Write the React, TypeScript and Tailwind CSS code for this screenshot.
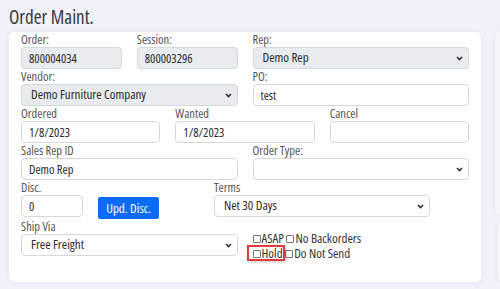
import React from "react";

const Label = ({ children }: { children?: React.ReactNode }) => (
  <div className="h-[15px] text-[12.5px] leading-[15px] text-[#555] whitespace-nowrap">{children}</div>
);

const Input = ({ value, disabled }: { value: string; disabled?: boolean }) => (
  <input
    readOnly
    value={value}
    className={`block w-full h-[22px] border border-[#d5d9de] rounded-[4px] pl-[7px] text-[12.5px] font-stretch-condensed text-[#2b2b2b] outline-none ${
      disabled ? "bg-[#e9ecef]" : "bg-white"
    }`}
  />
);

const Select = ({ value, disabled }: { value: string; disabled?: boolean }) => (
  <div className="relative">
    <select
      defaultValue={value}
      className={`block w-full h-[22px] appearance-none border border-[#d5d9de] rounded-[4px] pl-[9px] text-[13px] font-stretch-condensed text-[#2b2b2b] outline-none ${
        disabled ? "bg-[#e9ecef]" : "bg-white"
      }`}
    >
      <option value={value}>{value}</option>
    </select>
    <svg
      className="absolute right-[6px] top-[9px] pointer-events-none"
      width="7"
      height="5"
      viewBox="0 0 7 5"
    >
      <path d="M1 1 L3.5 3.5 L6 1" fill="none" stroke="#333" strokeWidth="1.7" />
    </svg>
  </div>
);

const Box = () => (
  <span className="inline-block w-[8px] h-[8px] border border-[#777] rounded-[1px] bg-white mr-[1px]" />
);

export default function App() {
  return (
    <div className="w-[500px] h-[289px] overflow-hidden bg-[#eff2f9] font-['Open_Sans',sans-serif] font-stretch-condensed">
      <h1 className="h-[32px] pl-[9px] pt-[5px] text-[19px] leading-[24px] text-[#383838]">Order Maint.</h1>
      <div className="flex gap-[14px] pl-[9px]">
        <div className="w-[472px] shrink-0 bg-white rounded-[5px] shadow-[0_0_6px_rgba(20,40,100,0.07)] px-[12px] pb-[12px]">
          <div className="grid grid-cols-12 gap-x-[15px]">
            <div className="col-span-3">
              <Label>Order:</Label>
              <Input value="800004034" disabled />
            </div>
            <div className="col-span-3">
              <Label>Session:</Label>
              <Input value="800003296" disabled />
            </div>
            <div className="col-span-6">
              <Label>Rep:</Label>
              <Select value="Demo Rep" disabled />
            </div>

            <div className="col-span-6">
              <Label>Vendor:</Label>
              <Select value="Demo Furniture Company" disabled />
            </div>
            <div className="col-span-6">
              <Label>PO:</Label>
              <Input value="test" />
            </div>

            <div className="col-span-4">
              <Label>Ordered</Label>
              <Input value="1/8/2023" />
            </div>
            <div className="col-span-4">
              <Label>Wanted</Label>
              <Input value="1/8/2023" />
            </div>
            <div className="col-span-4">
              <Label>Cancel</Label>
              <Input value="" />
            </div>

            <div className="col-span-6">
              <Label>Sales Rep ID</Label>
              <Input value="Demo Rep" />
            </div>
            <div className="col-span-6">
              <Label>Order Type:</Label>
              <Select value="" />
            </div>

            <div className="col-span-2">
              <Label>Disc.</Label>
              <Input value="0" />
            </div>
            <div className="col-span-3">
              <Label />
              <button className="h-[22px] px-[8px] bg-[#0b6cfb] text-white text-[13px] font-stretch-condensed leading-[22px] rounded-[2px]">
                Upd. Disc.
              </button>
            </div>
            <div className="col-span-6">
              <Label>Terms</Label>
              <Select value="Net 30 Days" />
            </div>
            <div className="col-span-1" />

            <div className="col-span-6">
              <Label>Ship Via</Label>
              <Select value="Free Freight" />
            </div>
            <div className="col-span-6 pt-[12px] text-[13px] leading-[15px] text-[#333] whitespace-nowrap">
              <div>
                <Box />ASAP <Box />No Backorders
              </div>
              <div>
                <span className="relative inline-block">
                  <span className="absolute -left-[6px] -right-[2px] -top-[1px] bottom-[0px] border-2 border-[#e23b3d] shadow-[1px_1px_3px_rgba(0,0,0,0.25)]" />
                  <Box />Hold
                </span>{" "}
                <Box />Do Not Send
              </div>
            </div>
          </div>
        </div>
        <div className="flex flex-col gap-[7px] shrink-0">
          <div className="w-[30px] h-[183px] bg-[#f3f5fb] rounded-[5px] shadow-[0_0_5px_rgba(20,40,100,0.06)]" />
          <div className="w-[30px] h-[60px] ml-[2px] bg-[#f3f5fb] rounded-[5px] shadow-[0_0_5px_rgba(20,40,100,0.06)]" />
        </div>
      </div>
    </div>
  );
}
